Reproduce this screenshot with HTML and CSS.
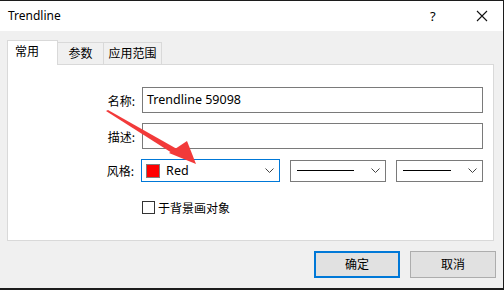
FILE: index.html
```html
<!DOCTYPE html>
<html>
<head>
<link rel="stylesheet" href="styles.css">
</head>
<body>
<div class="window">
  <div class="titlebar">
    <span class="title">Trendline</span>
    <span class="help">?</span>
    <svg class="close" width="12" height="12" viewBox="0 0 12 12"><path d="M1 1L11 11M11 1L1 11" stroke="#111" stroke-width="1.1" fill="none"/></svg>
  </div>
  <div class="content">
    <div class="tabs">
      <div class="tab active">常用</div>
      <div class="tab t2">参数</div>
      <div class="tab t3">应用范围</div>
    </div>
    <div class="panel">
      <div class="row">
        <label class="lbl">名称:</label>
        <div class="field wide">Trendline 59098</div>
      </div>
      <div class="row">
        <label class="lbl">描述:</label>
        <div class="field wide"></div>
      </div>
      <div class="row">
        <label class="lbl">风格:</label>
        <div class="combo color focus">
          <span class="swatch"></span>
          <span class="ctext">Red</span>
          <svg class="chev" width="9" height="6" viewBox="0 0 9 6"><path d="M0.5 0.5L4.5 4.5L8.5 0.5" stroke="#444" fill="none"/></svg>
        </div>
        <div class="combo line1">
          <span class="sample"></span>
          <svg class="chev" width="9" height="6" viewBox="0 0 9 6"><path d="M0.5 0.5L4.5 4.5L8.5 0.5" stroke="#444" fill="none"/></svg>
        </div>
        <div class="combo line2">
          <span class="sample"></span>
          <svg class="chev" width="9" height="6" viewBox="0 0 9 6"><path d="M0.5 0.5L4.5 4.5L8.5 0.5" stroke="#444" fill="none"/></svg>
        </div>
      </div>
      <div class="checkrow">
        <span class="box"></span>
        <span>于背景画对象</span>
      </div>
    </div>
    <div class="buttons">
      <div class="btn default">确定</div>
      <div class="btn">取消</div>
    </div>
  </div>
  <svg class="arrow" width="504" height="290" viewBox="0 0 504 290">
    <polygon points="106,111 108,110 177,149 172,153" fill="#f23a3a"/>
    <polygon points="169,153 187,141 196,164" fill="#f23a3a"/>
  </svg>
</div>
</body>
</html>
```

FILE: styles.css
```css
* {box-sizing: border-box;}

body {
  margin: 0;
  width: 504px;
  height: 290px;
  background-color: #1c1c1c;
  font-family: "Noto Sans", "Noto Sans CJK SC", sans-serif;
  font-size: 12px;
  color: #000;
  overflow: hidden;
}

.window {
  position: relative;
  margin-top: 1px;
  width: 503px;
  height: 287px;
  background-color: #f0f0f0;
}

.titlebar {
  height: 30px;
  background-color: #fff;
  display: flex;
  align-items: center;
  padding-left: 8px;
}

.title {
  flex: 1;
  font-size: 12px;
  padding-bottom: 1px;
}

.help {
  width: 10px;
  margin-right: 36px;
  font-size: 13px;
}

.close {
  margin-right: 15px;
}

.content {
  padding: 9px 0 0 7px;
}

.tabs {
  display: flex;
  align-items: flex-end;
  height: 24px;
}

.tab {
  height: 22px;
  border: 1px solid #d9d9d9;
  border-bottom: none;
  border-left: none;
  line-height: 20px;
  text-align: center;
  font-family: "Noto Sans CJK SC", sans-serif;
  font-size: 12px;
}

.t2 {
  width: 46px;
}

.t3 {
  width: 58px;
}

.tab.active {
  height: 25px;
  width: 51px;
  background-color: #fff;
  border-left: 1px solid #d9d9d9;
  text-align: left;
  padding: 0 7px;
  line-height: 20px;
  position: relative;
  z-index: 1;
  margin-bottom: -1px;
}

.panel {
  width: 487px;
  height: 177px;
  background-color: #fff;
  border: 1px solid #d9d9d9;
  padding-top: 22px;
}

.row {
  display: flex;
  align-items: center;
  margin-bottom: 10px;
}

.lbl {
  width: 127px;
  text-align: right;
  margin-right: 7px;
  font-family: "Noto Sans CJK SC", sans-serif;
  font-size: 12px;
}

.field {
  height: 26px;
  border: 1px solid #7a7a7a;
  padding-left: 4px;
  line-height: 23px;
  font-size: 12.5px;
}

.wide {
  width: 341px;
}

.combo {
  height: 22px;
  border: 1px solid #7a7a7a;
  display: flex;
  align-items: center;
  margin-right: 10px;
  padding-right: 5px;
}

.combo.focus {
  border-color: #0078d7;
}

.color {
  width: 140px;
  height: 23px;
}

.line1 {
  width: 96px;
}

.line2 {
  width: 88px;
}

.swatch {
  width: 14px;
  height: 14px;
  background-color: #ff0000;
  border: 1px solid #808080;
  margin-left: 4px;
}

.ctext {
  flex: 1;
  margin-left: 6px;
  font-size: 12.5px;
}

.sample {
  flex: 1;
  height: 1px;
  background-color: #000;
  margin: 0 17px 0 6px;
}

.chev {
  display: block;
}

.checkrow {
  display: flex;
  align-items: center;
  margin-left: 134px;
  margin-top: 17px;
  font-family: "Noto Sans CJK SC", sans-serif;
}

.box {
  width: 13px;
  height: 13px;
  border: 1px solid #333;
  margin-right: 3px;
}

.buttons {
  display: flex;
  justify-content: flex-end;
  margin-top: 10px;
  padding-right: 7px;
}

.btn {
  width: 86px;
  height: 27px;
  background-color: #e1e1e1;
  border: 1px solid #adadad;
  margin-left: 10px;
  text-align: center;
  line-height: 24px;
  font-family: "Noto Sans CJK SC", sans-serif;
}

.btn.default {
  border: 2px solid #0078d7;
  line-height: 22px;
}

.arrow {
  position: absolute;
  left: 0;
  top: -1px;
}
```
